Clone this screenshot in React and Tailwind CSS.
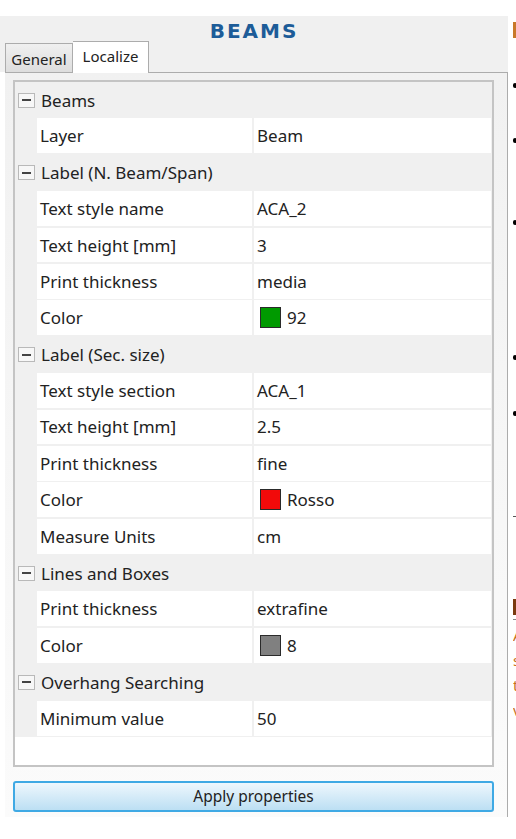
import React from "react";

const F = { fontFamily: '"Noto Sans", "Open Sans", Arial, sans-serif' };

function Minus() {
  return (
    <div className="w-[17px] h-[15px] border border-[#b9b9b9] bg-[#f7f7f7] flex items-center justify-center shrink-0">
      <div className="w-[9px] h-[2px] bg-[#444]" />
    </div>
  );
}

function Category({ label }) {
  return (
    <div className="h-[36.4px] bg-[#f0f0f0] flex items-center pl-[3px] shrink-0">
      <Minus />
      <span className="ml-[6px] text-[17px] text-[#222] leading-none">{label}</span>
    </div>
  );
}

function Prop({ name, value, swatch }) {
  return (
    <div className="h-[36.4px] flex shrink-0 bg-[#f0f0f0]">
      <div className="w-[22px] shrink-0" />
      <div className="w-[215px] shrink-0 bg-white flex items-center pl-[3px] mb-[1.5px] mr-[2px]">
        <span className="text-[17px] text-[#222] leading-none">{name}</span>
      </div>
      <div className="flex-1 bg-white flex items-center pl-[3px] mb-[1.5px] mr-[1px]">
        {swatch && (
          <div
            className="w-[21px] h-[21px] border border-[#2a2a2a] mr-[6px] ml-[3px] shrink-0"
            style={{ background: swatch }}
          />
        )}
        <span className="text-[17px] text-[#222] leading-none">{value}</span>
      </div>
    </div>
  );
}

export default function App() {
  return (
    <div className="w-[516px] h-[839px] bg-white flex overflow-hidden" style={F}>
      <div className="w-[508px] shrink-0 flex flex-col">
        <div className="h-[16px] bg-white shrink-0" />
        <div className="bg-[#f0f0f0] shrink-0">
          <div className="h-[25px] flex items-center justify-center pt-[4px]">
            <span
              className="text-[20px] font-bold text-[#1d5c98] tracking-[2px] leading-none"
              style={{ fontFamily: '"DejaVu Sans", Verdana, sans-serif' }}
            >
              BEAMS
            </span>
          </div>
          <div className="h-[31px] flex items-end pl-[5px]">
            <div className="h-[29px] w-[68px] border border-[#acacac] border-b-0 bg-gradient-to-b from-[#f0f0f0] to-[#dddddd] flex items-center justify-center">
              <span className="text-[15px] text-[#222] leading-none mt-[2px]">General</span>
            </div>
            <div className="h-[32px] w-[76px] border border-[#acacac] border-b-0 border-l-0 bg-white flex items-center justify-center -mb-[1px] relative z-10">
              <span className="text-[15px] text-[#222] leading-none -mt-[3px]">Localize</span>
            </div>
          </div>
        </div>
        <div className="ml-[5px] w-[503px] h-[745px] border-t border-r border-[#acacac] bg-gradient-to-b from-[#f1f1f1] to-[#fbfbfb] shrink-0 pt-[7px] pl-[8px]">
          <div className="w-[481px] h-[687px] border-2 border-[#c4c4c4] bg-white flex flex-col overflow-hidden">
            <Category label="Beams" />
            <Prop name="Layer" value="Beam" />
            <Category label="Label (N. Beam/Span)" />
            <Prop name="Text style name" value="ACA_2" />
            <Prop name="Text height [mm]" value="3" />
            <Prop name="Print thickness" value="media" />
            <Prop name="Color" value="92" swatch="#009a00" />
            <Category label="Label (Sec. size)" />
            <Prop name="Text style section" value="ACA_1" />
            <Prop name="Text height [mm]" value="2.5" />
            <Prop name="Print thickness" value="fine" />
            <Prop name="Color" value="Rosso" swatch="#f20a0a" />
            <Prop name="Measure Units" value="cm" />
            <Category label="Lines and Boxes" />
            <Prop name="Print thickness" value="extrafine" />
            <Prop name="Color" value="8" swatch="#808080" />
            <Category label="Overhang Searching" />
            <Prop name="Minimum value" value="50" />
          </div>
          <button className="mt-[14px] w-[481px] h-[31px] rounded-[3px] border-2 border-[#3fa9e4] bg-gradient-to-b from-[#eef7fd] to-[#bcdff3] flex items-center justify-center">
            <span className="text-[15.5px] text-[#222] leading-none">Apply properties</span>
          </button>
        </div>
        <div className="flex-1 bg-white" />
      </div>
      <div className="flex-1 flex flex-col pl-[5px]">
        <div className="h-[22px] shrink-0" />
        <div className="w-[3px] h-[16px] bg-[#c8782a] shrink-0" />
        <div className="h-[45px] shrink-0" />
        <div className="w-[4px] h-[5px] rounded-full bg-black shrink-0" />
        <div className="h-[50px] shrink-0" />
        <div className="w-[4px] h-[5px] rounded-full bg-black shrink-0" />
        <div className="h-[77px] shrink-0" />
        <div className="w-[4px] h-[5px] rounded-full bg-black shrink-0" />
        <div className="h-[130px] shrink-0" />
        <div className="w-[4px] h-[5px] rounded-full bg-black shrink-0" />
        <div className="h-[51px] shrink-0" />
        <div className="w-[4px] h-[5px] rounded-full bg-black shrink-0" />
        <div className="h-[100px] shrink-0" />
        <div className="w-[4px] h-[1px] bg-[#555] shrink-0" />
        <div className="h-[82px] shrink-0" />
        <div className="w-[3px] h-[16px] bg-[#7a3a10] shrink-0" />
        <div className="w-[4px] h-[1px] mt-[4px] bg-[#888] shrink-0" />
        <div className="flex flex-col text-[15px] leading-[25px] text-[#c8701c] mt-[3px] overflow-hidden w-[6px]">
          <span>A</span>
          <span>s</span>
          <span>t</span>
          <span>v</span>
        </div>
      </div>
    </div>
  );
}
